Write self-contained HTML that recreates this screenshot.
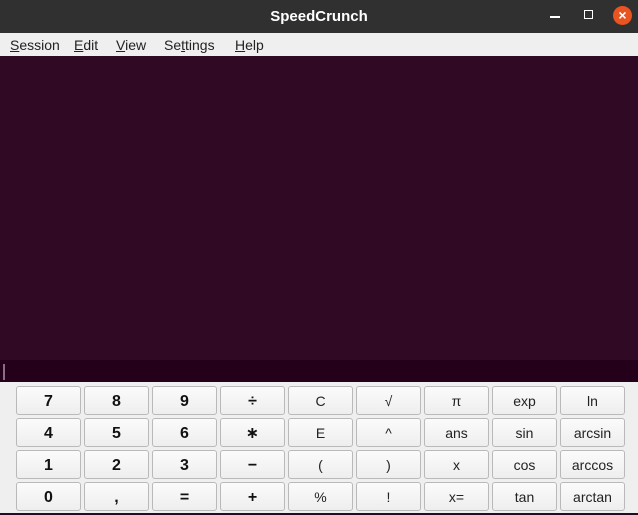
<!DOCTYPE html>
<html><head><style>
body{margin:0;width:638px;height:515px;overflow:hidden;font-family:"Liberation Sans","DejaVu Sans",sans-serif;background:#efefef;position:relative}
#title{position:absolute;left:0;top:0;width:638px;height:33px;background:#303030;color:#fff;font-weight:bold;font-size:15px;text-align:center;line-height:33px}
#menu{position:absolute;left:0;top:33px;width:638px;height:23px;background:#efefef;font-size:14px;color:#222;line-height:25px}
#menu span{position:absolute}
#editor{position:absolute;left:0;top:56px;width:638px;height:304px;background:#300a24}
#input{position:absolute;left:0;top:360px;width:638px;height:22px;background:#25001b}
#cur{position:absolute;left:3px;top:364px;width:2px;height:16px;background:#8a6f84}
.b{position:absolute;width:63px;height:27px;border:1px solid #b9b9b9;border-radius:3px;background:linear-gradient(#fbfbfb,#eeeeee);text-align:center;line-height:29px;font-size:14px;color:#222}
.n{font-weight:bold;font-size:16px;color:#111}
</style></head><body>
<div id="title">SpeedCrunch</div>
<div style="position:absolute;left:550px;top:16px;width:10px;height:2px;background:#fff"></div>
<div style="position:absolute;left:584px;top:10px;width:7px;height:7px;border:1.5px solid #fff"></div>
<div style="position:absolute;left:613px;top:6px;width:19px;height:19px;border-radius:50%;background:#e95420;color:#fff;font-size:14px;line-height:19px;text-align:center;font-weight:bold">×</div>
<div id="menu">
<span style="left:10px"><u>S</u>ession</span>
<span style="left:74px"><u>E</u>dit</span>
<span style="left:116px"><u>V</u>iew</span>
<span style="left:164px">Se<u>t</u>tings</span>
<span style="left:235px"><u>H</u>elp</span>
</div>
<div id="editor"></div>
<div id="input"></div>
<div id="cur"></div>
<div style="position:absolute;left:0;top:513px;width:638px;height:2px;background:#2a0a20"></div>
<div id="keys"></div>
<script>
var rows=[["7","8","9","÷","C","√","π","exp","ln"],["4","5","6","∗","E","^","ans","sin","arcsin"],["1","2","3","−","(",")","x","cos","arccos"],["0",",","=","+","%","!","x=","tan","arctan"]];
var h="";
rows.forEach(function(r,i){r.forEach(function(t,j){
var n=j<4?" n":"";
h+='<div class="b'+n+'" style="left:'+(16+68*j)+'px;top:'+(386+32*i)+'px">'+t+'</div>';});});
document.getElementById("keys").innerHTML=h;
</script>
</body></html>
